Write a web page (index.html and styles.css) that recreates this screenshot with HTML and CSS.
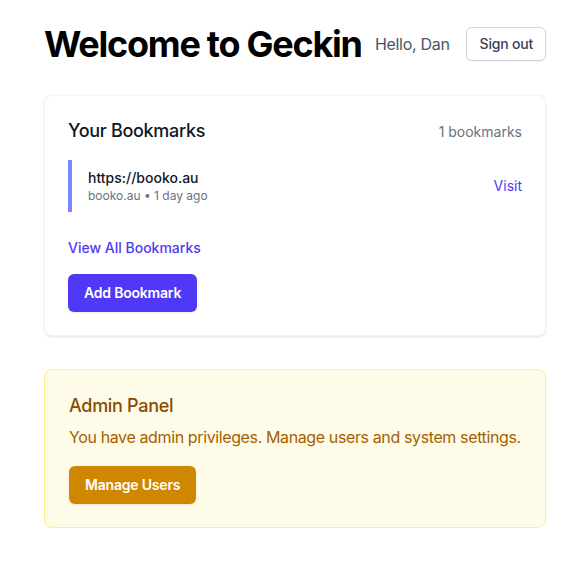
FILE: index.html
```html
<!DOCTYPE html>
<html lang="en">
<head>
<meta charset="utf-8">
<title>Geckin</title>
<link rel="stylesheet" href="styles.css">
</head>
<body>
<main class="page">
  <header class="header">
    <h1 class="title">Welcome to Geckin</h1>
    <div class="user">
      <span class="hello">Hello, Dan</span>
      <button class="btn-outline">Sign out</button>
    </div>
  </header>

  <section class="card">
    <div class="card-head">
      <h2 class="card-title">Your Bookmarks</h2>
      <span class="count">1 bookmarks</span>
    </div>
    <div class="bookmark">
      <div class="bm-info">
        <div class="bm-url">https://booko.au</div>
        <div class="bm-meta">booko.au • 1 day ago</div>
      </div>
      <a class="link" href="#">Visit</a>
    </div>
    <a class="link view-all" href="#">View All Bookmarks</a>
    <button class="btn btn-indigo">Add Bookmark</button>
  </section>

  <section class="admin">
    <h2 class="admin-title">Admin Panel</h2>
    <p class="admin-text">You have admin privileges. Manage users and system settings.</p>
    <button class="btn btn-yellow">Manage Users</button>
  </section>
</main>
</body>
</html>
```

FILE: styles.css
```css
* { box-sizing: border-box; }
html, body { margin: 0; padding: 0; background: #fff; }
body {
  font-family: Inter, "Noto Sans", sans-serif;
  color: #101828;
  -webkit-font-smoothing: antialiased;
  white-space: nowrap;
}
.page {
  width: 502px;
  margin-left: 44px;
  padding-top: 24px;
}
.header {
  display: flex;
  justify-content: space-between;
  align-items: center;
  margin-bottom: 31px;
}
.title {
  margin: 0;
  font-size: 36px;
  line-height: 40px;
  font-weight: 700;
  color: #000;
  letter-spacing: -1.25px;
}
.user {
  display: flex;
  align-items: center;
  gap: 16px;
}
.hello {
  font-size: 16px;
  color: #4a5565;
  letter-spacing: -0.3px;
}
.btn-outline {
  font-family: inherit;
  font-size: 14px;
  font-weight: 500;
  color: #364153;
  background: #fff;
  border: 1px solid #d1d5dc;
  border-radius: 6px;
  padding: 7px 12px 7px 13px;
  line-height: 18px;
  letter-spacing: -0.2px;
  box-shadow: 0 1px 2px rgba(0,0,0,0.05);
}
.card {
  background: #fff;
  border: 1px solid #f3f4f6;
  border-radius: 8px;
  box-shadow: 0 1px 3px rgba(0,0,0,0.08), 0 1px 2px rgba(0,0,0,0.04);
  padding: 21px 23px 23px;
  display: flex;
  flex-direction: column;
  align-items: flex-start;
  margin-bottom: 33px;
}
.card-head {
  width: 100%;
  display: flex;
  justify-content: space-between;
  align-items: center;
  margin-bottom: 15px;
}
.card-title {
  margin: 0;
  font-size: 18px;
  line-height: 28px;
  font-weight: 500;
  color: #101828;
  letter-spacing: -0.3px;
}
.count {
  font-size: 14px;
  color: #6a7282;
}
.bookmark {
  width: 100%;
  display: flex;
  justify-content: space-between;
  align-items: center;
  border-left: 4px solid #7c86ff;
  padding: 8px 0 8px 16px;
}
.bm-url {
  font-size: 14px;
  line-height: 20px;
  font-weight: 500;
  color: #101828;
}
.bm-meta {
  font-size: 12px;
  line-height: 16px;
  color: #6a7282;
}
.link {
  font-size: 14px;
  line-height: 20px;
  color: #4f39f6;
  text-decoration: none;
}
.view-all {
  font-weight: 500;
  margin-top: 26px;
  margin-bottom: 16px;
}
.btn {
  font-family: inherit;
  font-size: 14px;
  font-weight: 600;
  line-height: 20px;
  color: #fff;
  border: none;
  border-radius: 6px;
  padding: 9px 16px;
  letter-spacing: -0.2px;
  box-shadow: 0 1px 2px rgba(0,0,0,0.08);
}
.btn-indigo { background: #4f39f6; }
.btn-yellow { background: #d08700; }
.admin {
  background: #fefce8;
  border: 1px solid #fff085;
  border-radius: 8px;
  padding: 22px 24px 23px;
}
.admin-title {
  margin: 0 0 5px;
  font-size: 18px;
  line-height: 28px;
  font-weight: 500;
  color: #894b00;
  letter-spacing: -0.3px;
}
.admin-text {
  margin: 0 0 17px;
  font-size: 16px;
  line-height: 24px;
  color: #a65f00;
  letter-spacing: -0.38px;
}
```
